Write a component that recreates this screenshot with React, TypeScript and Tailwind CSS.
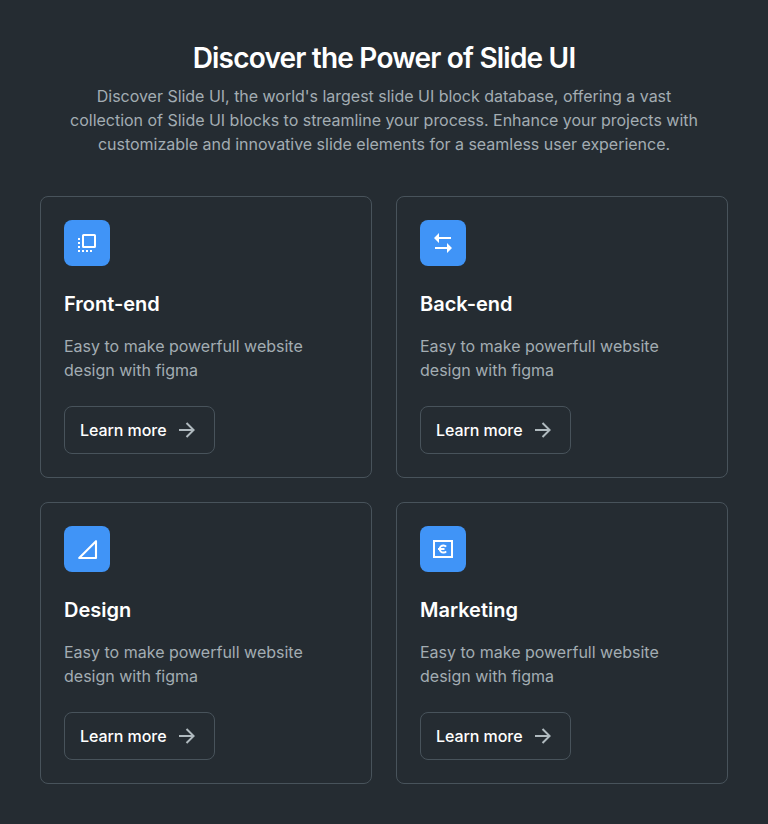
const cards = [
  { title: "Front-end", icon: "front" },
  { title: "Back-end", icon: "back" },
  { title: "Design", icon: "design" },
  { title: "Marketing", icon: "euro" },
];

function Icon({ name }: { name: string }) {
  return (
    <svg viewBox="0 0 24 24" className="size-6" fill="currentColor">
      {name === "front" && (
        <>
          <rect x="8" y="4" width="12" height="12" rx="0.6" fill="none" stroke="currentColor" strokeWidth="2" />
          <path d="M3 7h2v2H3zM3 11h2v2H3zM3 15h2v2H3zM3 19h2v2H3zM7 19h2v2H7zM11 19h2v2h-2zM15 19h2v2h-2z" />
        </>
      )}
      {name === "back" && <path d="M16 16v-4l5 5-5 5v-4H4v-2h12zM8 2v4h12v2H8v4L3 7l5-5z" />}
      {name === "design" && (
        <path d="M4.2 21L21 4.2V21z" fill="none" stroke="currentColor" strokeWidth="2.1" strokeLinejoin="round" />
      )}
      {name === "euro" && (
        <>
          <path fillRule="evenodd" d="M2 3h20v18H2zM4 5v14h16V5z" />
          <path
            d="M15.1 9.7A3.6 3.6 0 1 0 15.1 14.3M7 12h6.5"
            fill="none"
            stroke="currentColor"
            strokeWidth="2"
          />
        </>
      )}
    </svg>
  );
}

export default function App() {
  return (
    <main className="min-h-[824px] bg-[#252c32] px-10 pt-10 font-['Inter',sans-serif] text-white">
      <header className="text-center">
        <h1 className="text-[28px] font-semibold leading-9 tracking-[-0.8px]">Discover the Power of Slide UI</h1>
        <p className="mx-auto mt-2 w-[640px] text-base leading-6 tracking-[-0.02px] text-[#a3adb3]">
          Discover Slide UI, the world's largest slide UI block database, offering a vast collection of Slide UI blocks to streamline your process. Enhance your projects with customizable and innovative slide elements for a seamless user experience.
        </p>
      </header>
      <section className="mt-10 grid grid-cols-2 gap-6">
        {cards.map((c) => (
          <article key={c.title} className="h-[282px] rounded-lg border border-[#48535b] p-[23px]">
            <div className="flex size-[46px] items-center justify-center rounded-lg bg-[#4094f7]">
              <Icon name={c.icon} />
            </div>
            <h2 className="mt-6 text-xl font-semibold leading-7">{c.title}</h2>
            <p className="mt-4 w-[260px] text-base leading-6 text-[#a3adb3]">Easy to make powerfull website design with figma</p>
            <button className="mt-6 flex h-12 w-[151px] items-center gap-2 rounded-lg border border-[#48535b] pl-[15px] font-medium tracking-[-0.06px]">
              Learn more
              <svg viewBox="0 0 24 24" className="size-6 text-[#b0babf]" fill="currentColor">
                <path d="m16.172 11-5.364-5.364 1.414-1.414L20 12l-7.778 7.778-1.414-1.414L16.172 13H4v-2z" />
              </svg>
            </button>
          </article>
        ))}
      </section>
    </main>
  );
}
